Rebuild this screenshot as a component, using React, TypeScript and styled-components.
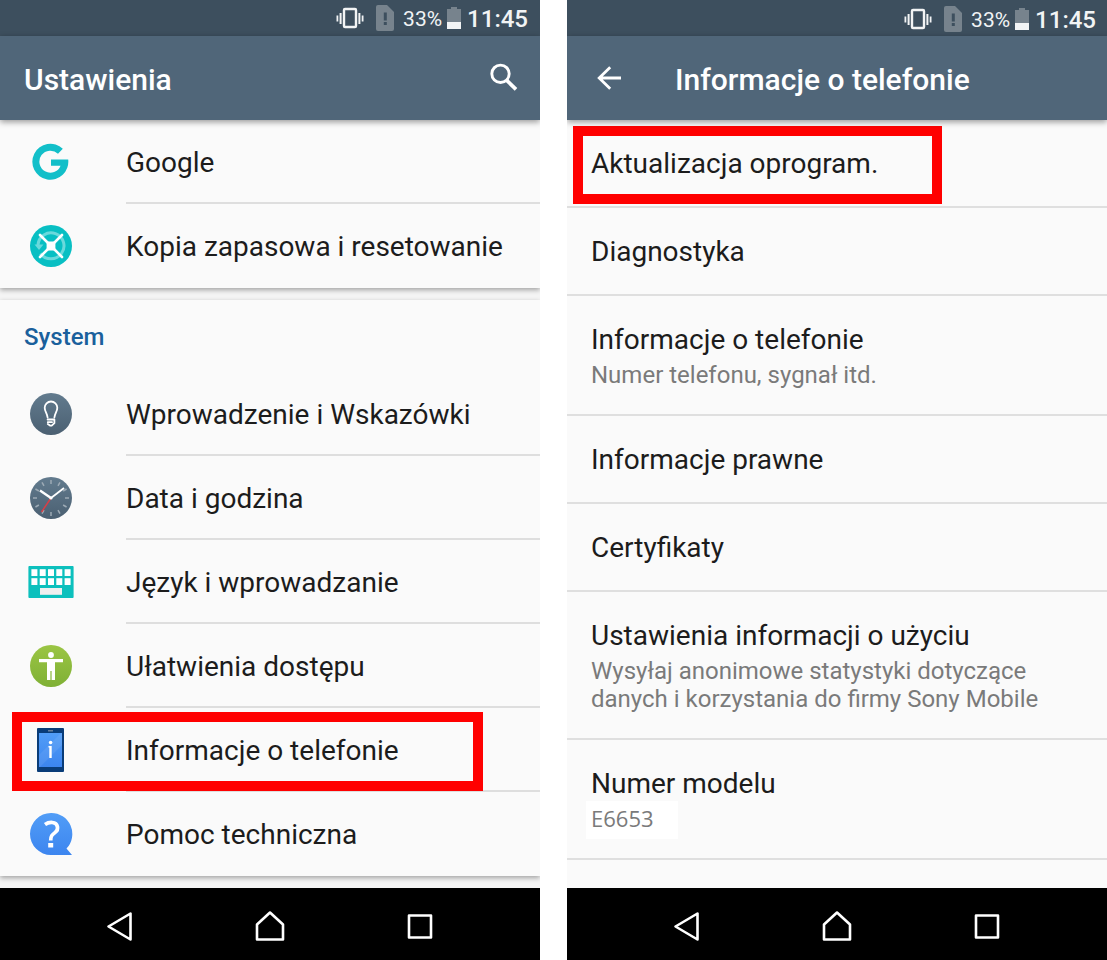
import React from 'react';
import styled, { createGlobalStyle } from 'styled-components';

const GlobalStyle = createGlobalStyle`
  *, *::before, *::after { box-sizing: border-box; }
  body {
    margin: 0;
    background: #fff;
    font-family: Roboto, "Liberation Sans", sans-serif;
    color: #1c1c1c;
  }
  svg { display: block; flex: none; }
`;

const Page = styled.main`
  display: grid;
  grid-template-columns: 1fr 1fr;
  column-gap: 27px;
  min-height: 100vh;
`;

const Phone = styled.section`
  display: flex;
  flex-direction: column;
  min-width: 0;
  overflow: hidden;
  background: #f5f5f5;
`;

const StatusBar = styled.div<{ $low?: boolean }>`
  display: flex;
  align-items: center;
  justify-content: flex-end;
  height: 36px;
  padding: ${(p) => (p.$low ? '2px 11px 0 0' : '0 12px 0 0')};
  background: #3d4f5e;
  color: #f2f4f5;
`;

const Percent = styled.span`
  margin: 0 5px 0 9px;
  padding-top: 2px;
  font-size: 21px;
  line-height: 34px;
`;

const Clock = styled.time`
  margin-left: 6px;
  padding-top: 2px;
  font-size: 24px;
  font-weight: 500;
  line-height: 34px;
`;

const SimSlot = styled.span`
  margin-left: 12px;
`;

const AppBar = styled.header`
  position: relative;
  z-index: 2;
  display: flex;
  align-items: center;
  height: 84px;
  padding: 0 18px 0 24px;
  background: #506679;
  color: #fff;
  box-shadow: 0 2px 6px rgba(0, 0, 0, 0.4);
`;

const Title = styled.h1`
  flex: 1;
  margin: 0;
  padding-top: 3px;
  font-size: 30px;
  font-weight: 500;
  line-height: 36px;
  white-space: nowrap;
`;

const IconButton = styled.button<{ $gap?: number }>`
  display: flex;
  margin: 0 ${(p) => p.$gap ?? 0}px 0 0;
  padding: 0;
  border: 0;
  background: none;
  color: inherit;
`;

const Content = styled.div`
  flex: 1;
  display: flex;
  flex-direction: column;
  gap: 12px;
  padding-bottom: 12px;
`;

const Card = styled.section`
  background: #fafafa;
  box-shadow: 0 2px 5px rgba(0, 0, 0, 0.34);
`;

const Plain = styled.div`
  flex: 1;
  padding-bottom: 28px;
  background: #fafafa;
`;

const Heading = styled.h2`
  margin: 0;
  padding: 19px 24px 17px;
  font-size: 24px;
  font-weight: 500;
  line-height: 36px;
  color: #1a609c;
`;

const List = styled.ul`
  margin: 0;
  padding: 0;
  list-style: none;
`;

const Item = styled.li`
  position: relative;
`;

const rowText = `
  color: inherit;
  text-decoration: none;
  font-size: 28px;
  line-height: 36px;
`;

const IconRow = styled.a`
  display: flex;
  align-items: center;
  height: 84px;
  padding-left: 27px;
  ${rowText}
`;

const RowIcon = styled.span`
  flex: none;
  width: 99px;
`;

const RowLabel = styled.span<{ $last?: boolean }>`
  flex: 1;
  display: flex;
  align-items: center;
  height: 84px;
  padding-top: 4px;
  border-bottom: 2px solid ${(p) => (p.$last ? 'transparent' : '#dedede')};
  white-space: nowrap;
`;

const TextRow = styled.a`
  display: block;
  padding: 26px 24px 24px;
  border-bottom: 2px solid #dfdfdf;
  ${rowText}
`;

const Summary = styled.span`
  display: block;
  max-width: 460px;
  margin: 3px 0 1px;
  font-size: 24px;
  line-height: 28px;
  color: #7a7a7a;
`;

const Model = styled.span`
  display: block;
  width: fit-content;
  height: 38px;
  margin: -4px 0 -6px -5px;
  padding: 0 24px 0 5px;
  background: #fff;
  font-family: "Open Sans", "Noto Sans", sans-serif;
  font-size: 22px;
  line-height: 34px;
`;

const Highlight = styled.span<{ $top: number; $left: number; $right: number; $bottom: number }>`
  position: absolute;
  top: ${(p) => p.$top}px;
  right: ${(p) => p.$right}px;
  bottom: ${(p) => p.$bottom}px;
  left: ${(p) => p.$left}px;
  z-index: 1;
  border: 10px solid #f00;
  pointer-events: none;
`;

const NavBar = styled.nav`
  position: relative;
  z-index: 2;
  display: flex;
  align-items: center;
  justify-content: center;
  gap: 102px;
  height: 72px;
  padding-top: 4px;
  background: #000;
  color: #fff;
`;

const VibrateIcon = () => (
  <svg width="28" height="22" viewBox="0 0 28 22" fill="none" stroke="#f2f4f5" aria-hidden="true">
    <rect x="8" y="2" width="12" height="18" rx="1" strokeWidth="2.4" />
    <path d="M4.6 6v11M23.4 6v11" strokeWidth="2" />
    <path d="M1.4 8.5v6M26.6 8.5v6" strokeWidth="1.8" />
  </svg>
);

const SimIcon = () => (
  <svg width="18" height="26" viewBox="0 0 18 26" aria-hidden="true">
    <path d="M2 0H11L18 7V24a2 2 0 0 1-2 2H2a2 2 0 0 1-2-2V2a2 2 0 0 1 2-2Z" fill="#77838d" />
    <path d="M7.8 7.500h3v8h-3zM7.800 17h3v3h-3z" fill="#3d4f5e" />
  </svg>
);

const BatteryIcon = () => (
  <svg width="14" height="22" viewBox="0 0 14 22" aria-hidden="true">
    <path d="M4 0h6v2h4v13H0V2h4z" fill="#77838d" />
    <path d="M0 15h14v7H0z" fill="#f2f4f5" />
  </svg>
);

const SearchIcon = () => (
  <svg width="36" height="36" viewBox="0 0 36 36" fill="none" stroke="#fff" aria-hidden="true">
    <circle cx="14.500" cy="13.800" r="8.700" strokeWidth="2.900" />
    <path d="M20.500 20.200 30 29.300" strokeWidth="3.700" />
  </svg>
);

const BackArrow = () => (
  <svg width="36" height="36" viewBox="0 0 36 36" fill="none" stroke="#fff" strokeWidth="2.800" aria-hidden="true">
    <path d="M30 18H8.500M19.200 7.200 8.200 18l11 10.800" />
  </svg>
);

const GoogleIcon = () => (
  <svg width="48" height="48" viewBox="0 0 48 48" aria-hidden="true">
    <path
      d="M35.800 10.800A18 18 0 1 0 41.200 21.600H24v6.100h9.600A11 11 0 1 1 31 15.700Z"
      fill="#12bfc9"
    />
  </svg>
);

const BackupIcon = () => (
  <svg width="48" height="48" viewBox="0 0 48 48" aria-hidden="true">
    <circle cx="24" cy="24" r="21" fill="#08bfc3" />
    <g fill="none" stroke="#6ad9dc" strokeWidth="3">
      <path d="M11 23A13 13 0 1 1 13.500 31.500" />
    </g>
    <path d="M7.500 22.500h9L12 28z" fill="#6ad9dc" />
    <path d="M13 13 35 35M35 13 13 35" stroke="#fff" strokeWidth="2.600" strokeLinecap="round" />
    <rect x="19.600" y="19.600" width="8.800" height="8.800" rx="1" fill="#fff" />
  </svg>
);

const BulbIcon = () => (
  <svg width="48" height="48" viewBox="0 0 48 48" fill="none" aria-hidden="true">
    <defs>
      <linearGradient id="slate" x1="0" y1="0" x2="0" y2="1">
        <stop offset="0" stopColor="#627b8e" />
        <stop offset="1" stopColor="#4b6072" />
      </linearGradient>
    </defs>
    <circle cx="24" cy="24" r="21" fill="url(#slate)" />
    <g stroke="#fff" strokeWidth="1.800" strokeLinecap="round" strokeLinejoin="round">
      <path d="M20.600 27.500C20.200 23.500 17.700 21.500 17.700 17.800A6.300 6.300 0 0 1 30.300 17.800C30.300 21.500 27.800 23.500 27.400 27.500" />
      <path d="M20.600 29.500H27.400V33.200L24.700 35.600H23L20.800 34M20.800 32.200H25" />
    </g>
  </svg>
);

const ClockIcon = () => (
  <svg width="48" height="48" viewBox="0 0 48 48" fill="none" aria-hidden="true">
    <circle cx="24" cy="24" r="21" fill="url(#slate)" />
    <g stroke="#9daab5" strokeWidth="1.500">
      {Array.from({ length: 12 }, (_, i) => (
        <path key={i} d="M24 6v4" transform={`rotate(${i * 30} 24 24)`} />
      ))}
    </g>
    <path d="M24 24 14.500 38" stroke="#d83f46" strokeWidth="1.500" />
    <path d="M13 16.500 24 24" stroke="#fff" strokeWidth="2.400" />
    <path d="M24 24 37 14" stroke="#fff" strokeWidth="1.800" />
    <circle cx="24" cy="24" r="1.600" fill="#fff" />
  </svg>
);

const KeyboardIcon = () => (
  <svg width="48" height="48" viewBox="0 0 48 48" aria-hidden="true">
    <rect x="1.400" y="8" width="45.200" height="32" rx="1" fill="#0cc0bd" />
    {[0, 1, 2, 3, 4].map((i) => (
      <g key={i} fill="#fff">
        <rect x={4.400 + i * 8.300} y="11.200" width="6" height="6.800" />
        <rect x={4.400 + i * 8.300} y="20.200" width="6" height="6.800" />
      </g>
    ))}
    <rect x="13" y="30" width="22" height="6.800" fill="#efefef" />
  </svg>
);

const AccessIcon = () => (
  <svg width="48" height="48" viewBox="0 0 48 48" aria-hidden="true">
    <defs>
      <linearGradient id="green" x1="0" y1="0" x2="0" y2="1">
        <stop offset="0" stopColor="#9bc544" />
        <stop offset="1" stopColor="#7fb035" />
      </linearGradient>
    </defs>
    <circle cx="24" cy="24" r="21" fill="url(#green)" />
    <circle cx="24" cy="13" r="2.900" fill="#fff" />
    <path d="M12 17h24v3.200h-8V38h-3.400v-9h-1.200v9H20V20.200h-8z" fill="#fff" />
  </svg>
);

const PhoneIcon = () => (
  <svg width="48" height="48" viewBox="0 0 48 48" aria-hidden="true">
    <defs>
      <linearGradient id="screen" x1="0" y1="0" x2="0" y2="1">
        <stop offset="0" stopColor="#519df7" />
        <stop offset="1" stopColor="#3c85ef" />
      </linearGradient>
    </defs>
    <rect x="10" y="2" width="27" height="44" rx="1" fill="#093c78" />
    <rect x="21" y="4" width="5" height="1.500" fill="#68809b" />
    <rect x="12" y="7" width="23" height="34" fill="url(#screen)" />
    <path d="M35 7v12L13 41H12V29L34 7z" fill="#fff" opacity="0.080" />
    <circle cx="23.600" cy="16.500" r="1.800" fill="#fff" />
    <path d="M21.500 20h3.200v12h-2.400V21.500h-.8z" fill="#fff" />
  </svg>
);

const HelpIcon = () => (
  <svg width="48" height="48" viewBox="0 0 48 48" fill="none" aria-hidden="true">
    <path d="M24 3A21 21 0 0 1 39.500 38.500L45 45H24A21 21 0 0 1 24 3Z" fill="url(#screen)" />
    <path
      d="M18 14.500C20.500 12.800 23 12.300 25.300 12.500 31.300 13 32 19.500 28.200 22.400 25.200 24.700 23.700 25.700 23.700 30.500"
      stroke="#fff"
      strokeWidth="3.700"
    />
    <rect x="21.200" y="33" width="5" height="4.500" fill="#fff" />
  </svg>
);

const NavIcon = ({ d }: { d: string }) => (
  <svg
    width="48"
    height="48"
    viewBox="0 0 48 48"
    fill="none"
    stroke="currentColor"
    strokeWidth="2.600"
    strokeLinejoin="round"
    aria-hidden="true"
  >
    <path d={d} />
  </svg>
);

const Status = ({ low }: { low?: boolean }) => (
  <StatusBar $low={low}>
    <VibrateIcon />
    <SimSlot>
      <SimIcon />
    </SimSlot>
    <Percent>33%</Percent>
    <BatteryIcon />
    <Clock>11:45</Clock>
  </StatusBar>
);

const Navigation = () => (
  <NavBar aria-label="Nawigacja">
    <IconButton aria-label="Wstecz">
      <NavIcon d="M12.500 24.500 34.500 11.500V37.500Z" />
    </IconButton>
    <IconButton aria-label="Ekran główny">
      <NavIcon d="M24 10.500 37 22.500V37.500H11V22.500Z" />
    </IconButton>
    <IconButton aria-label="Ostatnie aplikacje">
      <NavIcon d="M13 13.500H35V35.500H13Z" />
    </IconButton>
  </NavBar>
);

type Entry = { label: string; icon: React.ReactNode; marked?: boolean };

const accountEntries: Entry[] = [
  { label: 'Google', icon: <GoogleIcon /> },
  { label: 'Kopia zapasowa i resetowanie', icon: <BackupIcon /> },
];

const systemEntries: Entry[] = [
  { label: 'Wprowadzenie i Wskazówki', icon: <BulbIcon /> },
  { label: 'Data i godzina', icon: <ClockIcon /> },
  { label: 'Język i wprowadzanie', icon: <KeyboardIcon /> },
  { label: 'Ułatwienia dostępu', icon: <AccessIcon /> },
  { label: 'Informacje o telefonie', icon: <PhoneIcon />, marked: true },
  { label: 'Pomoc techniczna', icon: <HelpIcon /> },
];

const details: { label: string; summary?: React.ReactNode; marked?: boolean }[] = [
  { label: 'Aktualizacja oprogram.', marked: true },
  { label: 'Diagnostyka' },
  { label: 'Informacje o telefonie', summary: 'Numer telefonu, sygnał itd.' },
  { label: 'Informacje prawne' },
  { label: 'Certyfikaty' },
  {
    label: 'Ustawienia informacji o użyciu',
    summary: 'Wysyłaj anonimowe statystyki dotyczące danych i korzystania do firmy Sony Mobile',
  },
  { label: 'Numer modelu', summary: <Model>E6653</Model> },
];

const IconList = ({ entries }: { entries: Entry[] }) => (
  <List>
    {entries.map((e, i) => (
      <Item key={e.label}>
        <IconRow href="#">
          <RowIcon>{e.icon}</RowIcon>
          <RowLabel $last={i === entries.length - 1}>{e.label}</RowLabel>
        </IconRow>
        {e.marked && <Highlight $top={4} $right={57} $bottom={1} $left={12} />}
      </Item>
    ))}
  </List>
);

export default function App() {
  return (
    <>
      <GlobalStyle />
      <Page>
        <Phone>
          <Status />
          <AppBar>
            <Title>Ustawienia</Title>
            <IconButton aria-label="Szukaj">
              <SearchIcon />
            </IconButton>
          </AppBar>
          <Content>
            <Card>
              <IconList entries={accountEntries} />
            </Card>
            <Card>
              <Heading>System</Heading>
              <IconList entries={systemEntries} />
            </Card>
          </Content>
          <Navigation />
        </Phone>
        <Phone>
          <Status low />
          <AppBar>
            <IconButton aria-label="Wstecz" $gap={48}>
              <BackArrow />
            </IconButton>
            <Title>Informacje o telefonie</Title>
          </AppBar>
          <Plain>
            <List>
              {details.map((d) => (
                <Item key={d.label}>
                  <TextRow href="#">
                    {d.label}
                    {d.summary && <Summary>{d.summary}</Summary>}
                  </TextRow>
                  {d.marked && <Highlight $top={6} $right={165} $bottom={4} $left={6} />}
                </Item>
              ))}
            </List>
          </Plain>
          <Navigation />
        </Phone>
      </Page>
    </>
  );
}
